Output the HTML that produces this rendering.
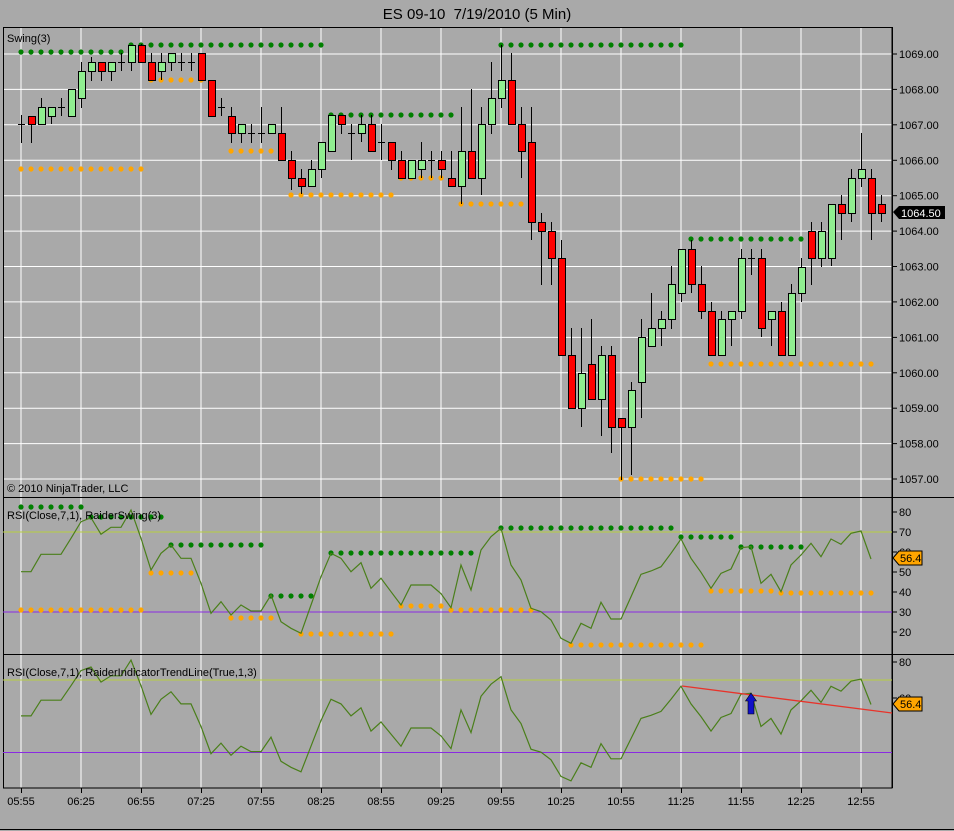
<!DOCTYPE html>
<html><head><meta charset="utf-8">
<style>
html,body{margin:0;padding:0;background:#a9a9a9;}
svg{display:block;font-family:"Liberation Sans",Arial,sans-serif;}
</style></head>
<body>
<svg id="c" width="954" height="831" xmlns="http://www.w3.org/2000/svg"></svg>
<script>
var S=document.getElementById('c');var h='';
function L(x1,y1,x2,y2,c,w){h+='<line x1="'+x1+'" y1="'+y1+'" x2="'+x2+'" y2="'+y2+'" stroke="'+c+'" stroke-width="'+(w||1)+'"/>';}
function T(x,y,s,sz,c,a){h+='<text x="'+x+'" y="'+y+'" font-size="'+sz+'" fill="'+(c||'#000')+'"'+(a?' text-anchor="'+a+'"':'')+'>'+s+'</text>';}
h+='<rect width="954" height="831" fill="#a9a9a9"/>';
T(477,19,'ES 09-10&#160; 7/19/2010 (5 Min)',15,'#000','middle');
for(var k=0;k<=12;k++){var y=54+35.42*k;L(3,y.toFixed(1),892,y.toFixed(1),'#fff',1);
 L(892,y.toFixed(1),897,y.toFixed(1),'#000',1);T(899,(y+4).toFixed(1),(1069-k).toFixed(2),11);}
for(var i=0;i<15;i++){var x=21+60*i;L(x,27,x,788,'#fff',1);}
h+='<rect x="3.5" y="27.5" width="888.5" height="760.5" fill="none" stroke="#000"/>';
L(3,497.5,954,497.5,'#000',1);L(3,654.5,954,654.5,'#000',1);L(892.5,27,892.5,788,'#000',1);
var D=[[115,143,124,124,2],[116,143,116,124,0],[98,124,107,124,1],[107,124,107,116,1],[98,116,107,107,2],[89,116,89,116,1],[62,108,71,98,1],[57,81,62,71,1],[62,81,62,71,0],[62,81,62,71,1],[53,71,62,62,2],[45,71,45,62,1],[44,62,45,62,0],[53,80,62,80,0],[53,80,62,71,1],[53,71,53,62,1],[53,71,62,62,2],[53,71,62,62,2],[53,80,53,80,0],[80,116,80,116,0],[98,116,107,107,2],[107,143,116,133,0],[124,143,124,133,1],[124,143,133,133,2],[107,143,133,133,2],[124,133,124,133,1],[107,160,133,160,0],[151,190,160,178,0],[169,194,178,186,0],[160,186,169,186,1],[142,178,142,169,1],[115,151,115,151,1],[115,134,115,124,0],[124,160,133,133,2],[115,142,124,133,1],[115,151,124,151,0],[124,160,142,142,2],[142,170,142,160,0],[151,178,160,178,0],[160,178,160,178,1],[142,178,160,169,1],[151,178,160,160,2],[151,178,160,169,0],[151,186,178,186,0],[107,204,151,186,1],[89,178,151,178,0],[107,195,124,178,1],[62,134,98,124,1],[45,108,80,98,1],[53,124,80,124,0],[107,178,124,151,0],[107,240,142,222,0],[213,285,222,231,0],[222,285,231,258,0],[240,355,258,355,0],[328,408,355,408,0],[328,427,373,408,1],[319,399,364,399,0],[346,436,355,399,1],[346,453,355,427,0],[418,480,418,427,0],[382,475,390,427,1],[319,418,337,382,1],[293,346,328,346,1],[311,346,319,328,1],[266,329,284,319,1],[249,302,249,293,1],[240,293,249,284,0],[266,319,284,311,0],[302,355,311,355,0],[311,355,319,355,1],[311,346,311,319,1],[249,319,258,311,1],[249,275,258,258,2],[249,337,258,328,0],[311,346,311,319,1],[302,355,311,355,0],[284,355,293,355,1],[258,302,267,293,1],[222,285,231,258,0],[222,267,231,258,1],[204,266,204,258,1],[195,240,204,213,0],[169,222,178,213,1],[133,187,169,178,1],[169,240,178,213,0],[195,222,204,213,0]];
function dots(x1,x2,y,c){for(var x=x1;x<=x2;x+=10)h+='<circle cx="'+x+'" cy="'+y+'" r="2.6" fill="'+c+'"/>';}
var G='#008000',O='#ffa500';
dots(21,121,52,G);dots(131,321,45,G);dots(21,141,169,O);dots(151,201,80,O);dots(231,271,151,O);dots(291,391,195,O);dots(331,451,115,G);dots(401,441,178,O);dots(461,521,204,O);dots(501,681,45,G);dots(621,701,479,O);dots(691,801,239,G);dots(711,871,364,O);
D.forEach(function(d,i){var x=21+10*i;L(x+0.5,d[0],x+0.5,d[1],'#000',1);
 if(d[4]==2){L(x-3,d[2]+0.5,x+4,d[2]+0.5,'#000',1);}
 else h+='<rect x="'+(x-3)+'.5" y="'+d[2]+'.5" width="7" height="'+Math.max(1,d[3]-d[2])+'" fill="'+(d[4]?'#90ee90':'#f00')+'" stroke="#000"/>';});
T(7,42,'Swing(3)',11);T(7,492,'© 2010 NinjaTrader, LLC',11);
h+='<polygon points="893,212 899,206 945,206 945,219 899,219" fill="#000"/>';T(901,217,'1064.50',11,'#fff');
var Z=[230,230,178,178,178,130,80,68,118,97,97,45,130,225,175,150,190,190,265,355,320,360,330,348,348,300,380,400,415,330,245,175,190,230,203,280,250,290,330,270,270,270,296,338,210,285,165,125,100,210,255,340,350,375,430,445,385,400,322,372,372,305,238,228,215,175,132,190,232,280,235,222,158,155,265,238,290,210,180,145,185,132,148,115,108,192];
L(3,532,892,532,'#b8d040',1);L(3,612,892,612,'#8a2be2',1);
[80,70,60,50,40,30,20].forEach(function(v){var y=532-(v-70)*2;L(892,y,897,y,'#000',1);T(899,y+4,v,11);});
dots(21,81,507,G);dots(91,161,517,G);dots(21,141,610,O);dots(151,191,573,O);dots(171,261,545,G);dots(231,271,618,O);dots(271,311,596,G);dots(301,391,634,O);dots(331,471,553,G);dots(401,441,606,O);dots(451,531,610,O);dots(501,671,528,G);dots(571,701,645,O);dots(681,731,537,G);dots(711,771,591,O);dots(781,871,593,O);dots(741,801,547,G);
var p1='',p2='';Z.forEach(function(Y,i){var x=21+10*i,y1=495+Y/3,v=70-(y1-532)/2;p1+=(i?'L':'M')+x+' '+y1.toFixed(1);p2+=(i?'L':'M')+x+' '+(680-(v-70)*1.8125).toFixed(1);});
h+='<path d="'+p1+'" fill="none" stroke="#4a7f1a" stroke-width="1.2"/>';
T(7,519,'RSI(Close,7,1), RaiderSwing(3)',11);
h+='<polygon points="893,558 899,551 922,551 922,565 899,565" fill="#ffa500" stroke="#000"/>';T(900,562,'56.4',11);
L(3,680,892,680,'#b8d040',1);L(3,752.5,892,752.5,'#8a2be2',1);
L(892,662,897,662,'#000',1);T(899,666,'80',11);L(892,698,897,698,'#000',1);T(899,702,'60',11);
h+='<path d="'+p2+'" fill="none" stroke="#4a7f1a" stroke-width="1.2"/>';
L(682,686,892,713,'#e8332a',1.3);
h+='<path d="M748 714 L748 701 L745.5 701 L751 693 L756.5 701 L754 701 L754 714 Z" fill="#1010c8" stroke="#000" stroke-width="0.6"/>';
T(7,676,'RSI(Close,7,1), RaiderIndicatorTrendLine(True,1,3)',11);
h+='<polygon points="893,704 899,697 922,697 922,711 899,711" fill="#ffa500" stroke="#000"/>';T(900,708,'56.4',11);
var tl=['05:55','06:25','06:55','07:25','07:55','08:25','08:55','09:25','09:55','10:25','10:55','11:25','11:55','12:25','12:55'];
tl.forEach(function(s,i){var x=21+60*i;L(x+0.5,788,x+0.5,793,'#000',1);T(x,805,s,11,'#000','middle');});
L(0,829.5,954,829.5,'#000',1);
S.innerHTML=h;
</script>
</body></html>
